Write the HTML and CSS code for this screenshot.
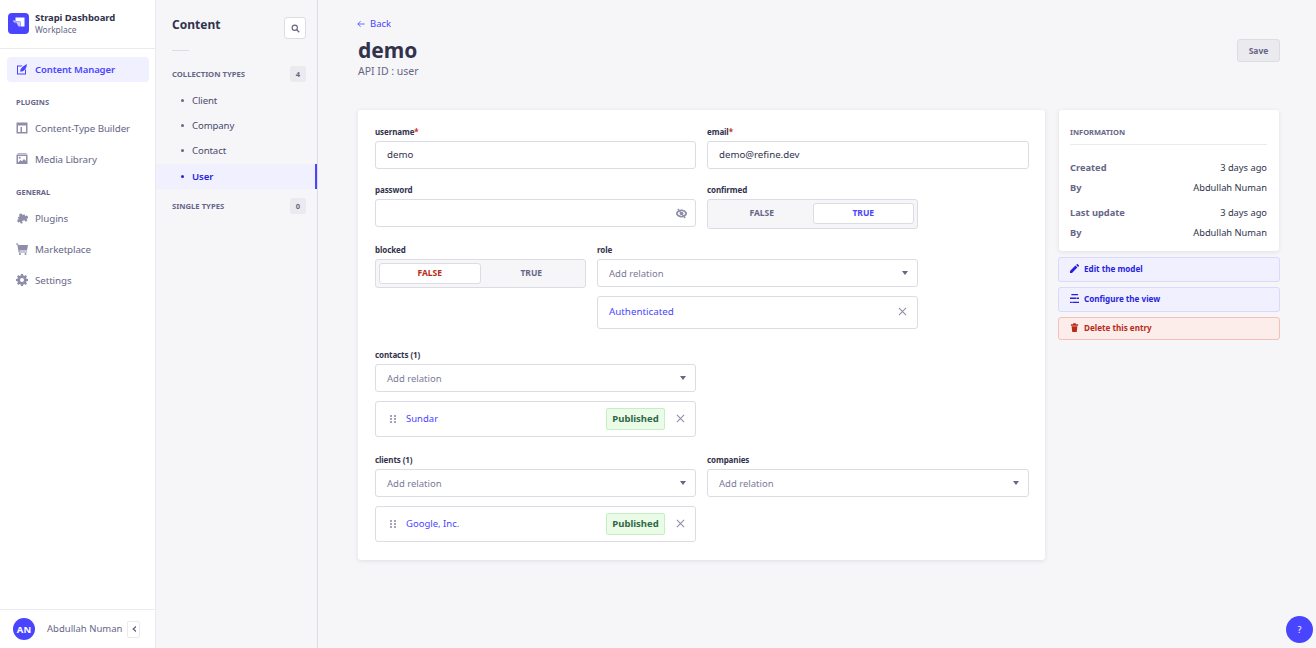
FILE: index.html
```html
<!DOCTYPE html>
<html lang="en">
<head>
    <meta charset="UTF-8">
    <meta name="viewport" content="width=device-width, initial-scale=1.0">
    <title>Strapi Dashboard</title>
    <link rel="stylesheet" href="styles.css">
</head>
<body>
    <!-- Main navigation -->
    <nav class="main-nav">
        <div class="brand">
            <svg class="brand-logo" viewBox="0 0 21 21"><rect width="21" height="21" rx="4" fill="#4945ff"/><path d="M7.500 4.500h9v9h-4V8.500h-5z" fill="#fff"/><path d="M4.500 7.500h3v3zM8 9h4v4.500h-1.500z" fill="#c9c8ff"/></svg>
            <div>
                <div class="brand-name">Strapi Dashboard</div>
                <div class="brand-sub">Workplace</div>
            </div>
        </div>
        <div class="nav-links">
            <a class="nav-item active">
                <svg viewBox="0 0 12 12"><path d="M1 2.500h5.500L5.500 3.500H2v7h7V7l1-1v5.500H1z" fill="#4945ff"/><path d="M4 8.500c.3-2.500 2.500-5.500 7-7.500-.5 4.500-2.500 7-5 7.500z" fill="#4945ff"/></svg>
                Content Manager
            </a>
            <div class="nav-heading">PLUGINS</div>
            <a class="nav-item">
                <svg viewBox="0 0 12 12"><path fill-rule="evenodd" d="M.5.500h11v11H.500zM2 3.500v6.500h2.500V5H10V3.500zM6 5v5h4V5z" fill="#8e8ea9"/></svg>
                Content-Type Builder
            </a>
            <a class="nav-item">
                <svg viewBox="0 0 12 12"><path d="M1.500 0h9v1h-9z" fill="#b5b5c8"/><path fill-rule="evenodd" d="M.5 1.500h11V11H.500zM2 3v6.500l2.500-2.500 1.500 1.300L8 6l2 2V3zM3.700 3.700a1 1 0 1 1 0 2 1 1 0 0 1 0-2z" fill="#8e8ea9"/></svg>
                Media Library
            </a>
            <div class="nav-heading nav-heading-general">GENERAL</div>
            <a class="nav-item">
                <svg viewBox="0 0 12 12"><path transform="rotate(-25 6 6)" d="M2.500 3.500h2.200a1.500 1.500 0 1 1 2.800 0h2.300v2.300a1.500 1.500 0 1 1 0 2.800v2.200H7.500a1.500 1.500 0 1 0-2.800 0H2.500V8.600a1.500 1.500 0 1 1 0-2.800z" fill="#8e8ea9"/></svg>
                Plugins
            </a>
            <a class="nav-item">
                <svg viewBox="0 0 12 12"><path d="M0 .5h2l.5 1.500h9.500l-1 5.500H3.500l.2 1H11v1H2.700L1.300 1.500H0z" fill="#8e8ea9"/><circle cx="4" cy="11" r="1" fill="#8e8ea9"/><circle cx="9.500" cy="11" r="1" fill="#8e8ea9"/></svg>
                Marketplace
            </a>
            <a class="nav-item">
                <svg viewBox="0 0 12 12"><path fill-rule="evenodd" d="M5 0h2l.3 1.500 1 .4L9.600 1 11 2.400l-.9 1.300.4 1L12 5v2l-1.500.3-.4 1 .9 1.300L9.600 11l-1.300-.9-1 .4L7 12H5l-.3-1.500-1-.4L2.400 11 1 9.600l.9-1.300-.4-1L0 7V5l1.500-.3.4-1L1 2.400 2.400 1l1.300.9 1-.4zM6 4a2 2 0 1 0 0 4 2 2 0 0 0 0-4z" fill="#8e8ea9"/></svg>
                Settings
            </a>
        </div>
        <div class="nav-footer">
            <span class="avatar">AN</span>
            <span class="nav-user">Abdullah Numan</span>
            <button class="collapse-btn"><svg viewBox="0 0 8 8"><path d="M6 .8 2.200 4 6 7.200V5.500L4.200 4 6 2.500z" fill="#666687"/></svg></button>
        </div>
    </nav>

    <!-- Content types list -->
    <aside class="sub-nav">
        <div class="sub-head">
            <h2>Content</h2>
            <button class="search-btn"><svg viewBox="0 0 12 12"><circle cx="5" cy="5" r="3.500" fill="none" stroke="#666687" stroke-width="1.500"/><path d="m7.500 7.500 3.500 3.500" stroke="#666687" stroke-width="1.800"/></svg></button>
        </div>
        <div class="sub-divider"></div>
        <div class="sub-section">
            <span>COLLECTION TYPES</span>
            <span class="count">4</span>
        </div>
        <ul class="sub-list">
            <li>Client</li>
            <li>Company</li>
            <li>Contact</li>
            <li class="active">User</li>
        </ul>
        <div class="sub-section sub-section-single">
            <span>SINGLE TYPES</span>
            <span class="count">0</span>
        </div>
    </aside>

    <main class="page">
        <a class="back"><svg viewBox="0 0 10 10"><path d="M9.500 5H1M4.500 1.500 1 5l3.500 3.500" fill="none" stroke="#4945ff"/></svg>Back</a>
        <div class="page-head">
            <div>
                <h1>demo</h1>
                <div class="api-id">API ID : user</div>
            </div>
            <button class="save">Save</button>
        </div>

        <div class="layout">
            <form class="card">
                <div class="row">
                    <div>
                        <label>username<span class="req">*</span></label>
                        <div class="box input">demo</div>
                    </div>
                    <div>
                        <label>email<span class="req">*</span></label>
                        <div class="box input">demo@refine.dev</div>
                    </div>
                </div>
                <div class="row row-confirmed">
                    <div>
                        <label>password</label>
                        <div class="box input input-pass">
                            <svg class="eye" viewBox="0 0 12 12"><path d="M.5 6C2 3.500 3.800 2.500 6 2.500s4 1 5.500 3.500C10 8.500 8.200 9.500 6 9.500S2 8.500.5 6z" fill="none" stroke="#8e8ea9" stroke-width="1.600"/><circle cx="6" cy="6" r="2" fill="#8e8ea9"/><path d="m2 1 8 10" stroke="#8e8ea9" stroke-width="1.500"/></svg>
                        </div>
                    </div>
                    <div>
                        <label>confirmed</label>
                        <div class="toggle toggle-tall">
                            <span class="opt">FALSE</span>
                            <span class="opt on on-true">TRUE</span>
                        </div>
                    </div>
                </div>
                <div class="row row-blocked">
                    <div>
                        <label>blocked</label>
                        <div class="toggle">
                            <span class="opt on on-false">FALSE</span>
                            <span class="opt">TRUE</span>
                        </div>
                    </div>
                    <div>
                        <label>role</label>
                        <div class="box select">Add relation<i class="caret"></i></div>
                        <div class="box relation relation-plain">
                            <span class="rel-name">Authenticated</span>
                            <svg class="close" viewBox="0 0 10 10"><path d="m1 1 8 8M9 1 1 9" stroke="#8e8ea9" stroke-width="1.200"/></svg>
                        </div>
                    </div>
                </div>
                <div class="row row-contacts">
                    <div>
                        <label>contacts (1)</label>
                        <div class="box select">Add relation<i class="caret"></i></div>
                        <div class="box relation">
                            <svg class="drag" viewBox="1 1 6 8"><path d="M1 1h2v2H1zM5 1h2v2H5zM1 4h2v2H1zM5 4h2v2H5zM1 7h2v2H1zM5 7h2v2H5z" fill="#a5a5ba"/></svg>
                            <span class="rel-name">Sundar</span>
                            <span class="badge">Published</span>
                            <svg class="close" viewBox="0 0 10 10"><path d="m1 1 8 8M9 1 1 9" stroke="#8e8ea9" stroke-width="1.200"/></svg>
                        </div>
                    </div>
                </div>
                <div class="row row-last">
                    <div>
                        <label>clients (1)</label>
                        <div class="box select">Add relation<i class="caret"></i></div>
                        <div class="box relation">
                            <svg class="drag" viewBox="1 1 6 8"><path d="M1 1h2v2H1zM5 1h2v2H5zM1 4h2v2H1zM5 4h2v2H5zM1 7h2v2H1zM5 7h2v2H5z" fill="#a5a5ba"/></svg>
                            <span class="rel-name">Google, Inc.</span>
                            <span class="badge">Published</span>
                            <svg class="close" viewBox="0 0 10 10"><path d="m1 1 8 8M9 1 1 9" stroke="#8e8ea9" stroke-width="1.200"/></svg>
                        </div>
                    </div>
                    <div>
                        <label>companies</label>
                        <div class="box select">Add relation<i class="caret"></i></div>
                    </div>
                </div>
            </form>

            <div class="side">
                <div class="info">
                    <div class="info-title">INFORMATION</div>
                    <div class="info-row"><b>Created</b><span>3 days ago</span></div>
                    <div class="info-row"><b>By</b><span>Abdullah Numan</span></div>
                    <div class="info-row info-row-next"><b>Last update</b><span>3 days ago</span></div>
                    <div class="info-row"><b>By</b><span>Abdullah Numan</span></div>
                </div>
                <a class="action">
                    <svg viewBox="0 0 10 10"><path d="M0 10V7.800L6 1.800 8.200 4 2.200 10zM6.800 1 7.600.2a.7.7 0 0 1 1 0l1.200 1.200a.7.7 0 0 1 0 1L9 3.200z" fill="#271fe0"/></svg>
                    Edit the model
                </a>
                <a class="action">
                    <svg viewBox="0 0 10 10"><path d="M1.500 0H9v1.500H1.500zM0 4h7v1.500H0zM7.500 4H10v1.500H7.500zM0 8.500h2V10H0zM2.500 8.500H10V10H2.500z" fill="#271fe0"/></svg>
                    Configure the view
                </a>
                <a class="action action-danger">
                    <svg viewBox="0 0 10 10"><path d="M1 1.500h8V3H1zM3.500.3h3v1h-3zM1.800 3.500h6.400L7.500 10h-5z" fill="#b72b1a"/></svg>
                    Delete this entry
                </a>
            </div>
        </div>
    </main>

    <button class="help">?</button>
</body>
</html>
```

FILE: styles.css
```css
* {
    box-sizing: border-box;
}
html, body {
    height: 100%;
}
body {
    font-family: "Noto Sans", Arial, sans-serif;
    font-size: 10px;
    margin: 0;
    padding: 0;
    background-color: #f6f6f9;
    color: #32324d;
    display: flex;
    overflow: hidden;
}
button {
    font-family: inherit;
    padding: 0;
}

/* main nav */
.main-nav {
    width: 156px;
    flex-shrink: 0;
    height: 648px;
    background-color: white;
    border-right: 1px solid #eaeaef;
    display: flex;
    flex-direction: column;
}
.brand {
    height: 49px;
    padding: 0 6px 2px 8px;
    border-bottom: 1px solid #eaeaef;
    display: flex;
    align-items: center;
    gap: 6px;
}
.brand-logo {
    width: 21px;
    height: 21px;
    flex-shrink: 0;
}
.brand-name {
    font-size: 9.500px;
    font-weight: 700;
    letter-spacing: -0.1px;
    line-height: 13px;
}
.brand-sub {
    font-size: 8.400px;
    color: #666687;
    line-height: 12px;
}
.nav-links {
    flex: 1;
    padding: 8px 6px 0 7px;
}
.nav-item {
    height: 25px;
    margin-bottom: 6px;
    padding: 2px 9px 0;
    display: flex;
    align-items: center;
    gap: 7px;
    border-radius: 4px;
    color: #666687;
    font-size: 9.800px;
    letter-spacing: -0.1px;
}
.nav-item svg {
    width: 12px;
    height: 12px;
    margin-top: -2px;
    flex-shrink: 0;
}
.nav-item.active {
    padding-top: 0;
    background-color: #f0f0ff;
    color: #4945ff;
    font-weight: 600;
    font-size: 9.500px;
}
.nav-heading {
    font-size: 7.500px;
    font-weight: 700;
    color: #666687;
    line-height: 10px;
    padding-left: 9px;
    margin: 15px 0 8px;
}
.nav-heading-general {
    margin-top: 16px;
}
.nav-footer {
    height: 39px;
    border-top: 1px solid #eaeaef;
    padding: 0 15px 0 13px;
    display: flex;
    align-items: center;
}
.avatar {
    width: 22px;
    height: 22px;
    border-radius: 50%;
    background-color: #4945ff;
    color: white;
    font-weight: 700;
    font-size: 9.500px;
    display: flex;
    align-items: center;
    justify-content: center;
}
.nav-user {
    margin-left: 12px;
    margin-bottom: 2px;
    font-size: 9.500px;
    color: #666687;
}
.collapse-btn {
    width: 13px;
    height: 17px;
    margin-left: auto;
    background-color: white;
    border: 1px solid #eaeaef;
    border-radius: 2px;
    display: flex;
    align-items: center;
    justify-content: center;
}
.collapse-btn svg {
    width: 8px;
    height: 8px;
}

/* content types */
.sub-nav {
    width: 162px;
    flex-shrink: 0;
    height: 648px;
    border-right: 1px solid #dcdce4;
}
.sub-head {
    height: 39px;
    padding: 17px 11px 0 16px;
    display: flex;
    justify-content: space-between;
}
.sub-head h2 {
    margin: 0;
    font-size: 12px;
    line-height: 16px;
}
.search-btn {
    width: 22px;
    height: 22px;
    background-color: white;
    border: 1px solid #dcdce4;
    border-radius: 3px;
    display: flex;
    align-items: center;
    justify-content: center;
}
.search-btn svg {
    width: 9px;
    height: 9px;
}
.sub-divider {
    width: 17px;
    height: 1px;
    margin: 11px 0 15px 16px;
    background-color: #dcdce4;
}
.sub-section {
    height: 16px;
    padding: 0 11px 0 16px;
    display: flex;
    align-items: center;
    justify-content: space-between;
    font-size: 7.700px;
    font-weight: 700;
    color: #666687;
}
.sub-section-single {
    margin-top: 9px;
}
.count {
    width: 16px;
    height: 16px;
    border-radius: 2px;
    background-color: #eaeaef;
    display: flex;
    align-items: center;
    justify-content: center;
    font-size: 7.500px;
}
.sub-list {
    list-style: none;
    margin: 6px 0 0;
    padding: 0;
}
.sub-list li {
    height: 25px;
    padding-left: 36px;
    display: flex;
    align-items: center;
    position: relative;
    font-size: 9.600px;
    letter-spacing: -0.1px;
    color: #4a4a6a;
}
.sub-list li::before {
    content: "";
    position: absolute;
    left: 25px;
    top: 11px;
    width: 3px;
    height: 3px;
    border-radius: 50%;
    background-color: #666687;
}
.sub-list li.active {
    margin-top: 1px;
    background-color: #f0f0ff;
    border-right: 2px solid #4945ff;
    color: #271fe0;
    font-weight: 600;
}
.sub-list li.active::before {
    background-color: #271fe0;
}

/* page */
.page {
    flex: 1;
    padding: 17px 36px 0 40px;
}
.back {
    display: flex;
    align-items: center;
    gap: 5px;
    margin-left: -1px;
    line-height: 13px;
    font-size: 9.500px;
    color: #4945ff;
}
.back svg {
    width: 8px;
    height: 8px;
}
.page-head {
    display: flex;
    justify-content: space-between;
    margin-top: 7px;
    height: 73px;
}
h1 {
    margin: 0;
    font-size: 21px;
    line-height: 26px;
}
.api-id {
    font-size: 10.500px;
    line-height: 16px;
    color: #666687;
}
.save {
    width: 43px;
    height: 23px;
    margin-top: 2px;
    padding-bottom: 1px;
    background-color: #eaeaef;
    border: 1px solid #dcdce4;
    border-radius: 3px;
    color: #666687;
    font-size: 8.500px;
    font-weight: 700;
}
.layout {
    display: flex;
    gap: 14px;
    align-items: flex-start;
}

/* form card */
.card {
    width: 687px;
    flex-shrink: 0;
    background-color: white;
    border-radius: 3px;
    box-shadow: 0 1px 4px rgba(33, 33, 52, 0.1);
    padding: 16px 16px 18px 17px;
}
.row {
    display: grid;
    grid-template-columns: 321px 322px;
    column-gap: 11px;
    margin-bottom: 15px;
}
.row-confirmed {
    grid-template-columns: 321px 211px;
}
.row-blocked {
    grid-template-columns: 211px 321px;
    margin-bottom: 20px;
}
.row-contacts {
    margin-bottom: 17px;
}
.row-last {
    margin-bottom: 0;
}
label {
    display: block;
    height: 15px;
    line-height: 11px;
    font-size: 8px;
    letter-spacing: -0.1px;
    font-weight: 700;
}
.req {
    color: #d02b20;
}
.box {
    background-color: white;
    border: 1px solid #dcdce4;
    border-radius: 3px;
    display: flex;
    align-items: center;
}
.input {
    height: 28px;
    padding: 0 11px 2px;
    font-size: 9.700px;
}
.input-pass {
    justify-content: flex-end;
    padding: 0 8px 0 11px;
}
.eye {
    width: 11px;
    height: 11px;
}
.toggle {
    height: 29px;
    padding: 3px;
    background-color: #f6f6f9;
    border: 1px solid #dcdce4;
    border-radius: 3px;
    display: flex;
}
.toggle-tall {
    height: 30px;
    padding-bottom: 4px;
}
.opt {
    flex: 1;
    display: flex;
    align-items: center;
    justify-content: center;
    padding-bottom: 2px;
    border: 1px solid transparent;
    border-radius: 3px;
    font-size: 8.500px;
    font-weight: 700;
    color: #666687;
}
.opt.on {
    background-color: white;
    border-color: #dcdce4;
}
.on-true {
    color: #4945ff;
}
.on-false {
    color: #b72b1a;
}
.select {
    height: 28px;
    padding: 0 9px 0 11px;
    justify-content: space-between;
    font-size: 9.500px;
    color: #7b7b98;
}
.caret {
    width: 0;
    height: 0;
    border-left: 3.500px solid transparent;
    border-right: 3.500px solid transparent;
    border-top: 4px solid #666687;
}
.relation {
    height: 36px;
    margin-top: 9px;
    padding: 0 10px 0 14px;
    font-size: 9.500px;
}
.relation-plain {
    height: 33px;
    padding-left: 11px;
    margin-top: 9px;
    font-size: 9.800px;
}
.rel-name {
    color: #4945ff;
    flex: 1;
    margin-bottom: 2px;
}
.drag {
    width: 6px;
    height: 8px;
    margin-right: 10px;
}
.badge {
    width: 59px;
    height: 22px;
    margin-right: 11px;
    padding-bottom: 2px;
    background-color: #eafbe7;
    border: 1px solid #c6f0c2;
    border-radius: 2px;
    color: #2f6846;
    font-size: 9.500px;
    font-weight: 700;
    display: flex;
    align-items: center;
    justify-content: center;
}
.close {
    width: 9px;
    height: 9px;
    margin-bottom: 2px;
}

/* right column */
.side {
    width: 221px;
    display: flex;
    flex-direction: column;
    gap: 5px;
}
.info {
    width: 220px;
    height: 141px;
    margin-bottom: 1px;
    padding: 17px 12px 0 11px;
    background-color: white;
    border-radius: 3px;
    box-shadow: 0 1px 4px rgba(33, 33, 52, 0.1);
}
.info-title {
    height: 18px;
    margin-bottom: 16px;
    border-bottom: 1px solid #eaeaef;
    font-size: 7.500px;
    font-weight: 700;
    line-height: 11px;
    color: #666687;
}
.info-row {
    display: flex;
    justify-content: space-between;
    height: 20px;
    line-height: 14px;
    font-size: 9.300px;
}
.info-row-next {
    margin-top: 5px;
}
.info-row b {
    color: #666687;
    font-weight: 700;
}
.action {
    height: 25px;
    margin-left: -1px;
    padding: 0 10px 2px 11px;
    display: flex;
    align-items: center;
    gap: 5px;
    background-color: #f0f0ff;
    border: 1px solid #d9d8ff;
    border-radius: 3px;
    color: #271fe0;
    font-size: 8.100px;
    font-weight: 700;
}
.action svg {
    width: 9px;
    height: 9px;
}
.action-danger {
    height: 23px;
    background-color: #fcecea;
    border-color: #f5c0b8;
    color: #b72b1a;
}
.help {
    position: absolute;
    right: 3px;
    bottom: 5px;
    width: 27px;
    height: 27px;
    border: none;
    border-radius: 50%;
    background-color: #4945ff;
    color: white;
    font-size: 9px;
}
```
